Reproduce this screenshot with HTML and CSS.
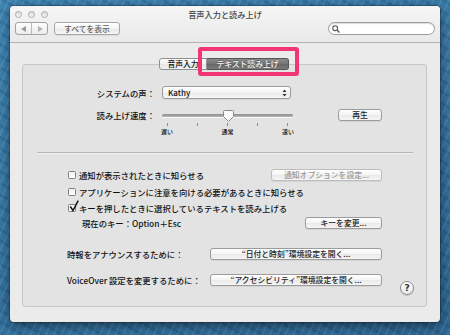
FILE: index.html
```html
<!DOCTYPE html>
<html lang="ja">
<head>
  <meta charset="UTF-8">
  <meta name="viewport" content="width=device-width, initial-scale=1.0">
  <title>音声入力と読み上げ</title>
  <link rel="stylesheet" href="styles.css">
</head>
<body>
  <div class="window">
    <header class="header">
      <div class="titlebar">
        <div class="lights"><span></span><span></span><span></span></div>
        <div class="title">音声入力と読み上げ</div>
        <div></div>
      </div>
      <div class="toolbar">
        <div class="nav">
          <span class="seg"><svg width="6" height="6" viewBox="0 0 6 6"><path d="M0 3 L5 0 L5 6 Z" fill="#9a9a9a"/></svg></span>
          <span class="seg"><svg width="6" height="6" viewBox="0 0 6 6"><path d="M6 3 L1 0 L1 6 Z" fill="#b4b4b4"/></svg></span>
        </div>
        <button class="btn show-all">すべてを表示</button>
        <div class="search">
          <svg width="8" height="8" viewBox="0 0 8 8"><circle cx="3.2" cy="3.2" r="2.4" fill="none" stroke="#555" stroke-width="1.1"/><path d="M5 5 L7.4 7.4" stroke="#555" stroke-width="1.4"/></svg>
        </div>
      </div>
    </header>

    <main class="content">
      <div class="tabs">
        <button class="tab">音声入力</button>
        <button class="tab active">テキスト読み上げ<span class="highlight"></span></button>
      </div>

      <section class="panel">
        <div class="voice-row">
          <label>システムの声：</label>
          <div class="popup">
            <span>Kathy</span>
            <svg width="5" height="8" viewBox="0 0 5 8"><path d="M2.5 0.5 L4.5 3 L0.5 3 Z M2.5 7.5 L4.5 5 L0.5 5 Z" fill="#333"/></svg>
          </div>
        </div>

        <div class="speed-row">
          <label>読み上げ速度：</label>
          <div class="slider">
            <div class="track">
              <span class="thumb"><svg width="11" height="12" viewBox="0 0 11 12"><path d="M1.5 0.5 H9.5 Q10.5 0.5 10.5 1.5 V6.5 L5.5 11.5 L0.5 6.5 V1.5 Q0.5 0.5 1.5 0.5 Z" fill="#fbfbfb" stroke="#8a8a8a"/></svg></span>
            </div>
            <div class="ticks"><i></i><i></i><i></i><i></i><i></i></div>
            <div class="scale"><span>遅い</span><span>通常</span><span>速い</span></div>
          </div>
          <button class="btn play">再生</button>
        </div>

        <hr class="sep">

        <div class="check-row first">
          <span class="box"></span>
          <span class="text">通知が表示されたときに知らせる</span>
          <button class="btn disabled notify">通知オプションを設定...</button>
        </div>
        <div class="check-row">
          <span class="box"></span>
          <span class="text">アプリケーションに注意を向ける必要があるときに知らせる</span>
        </div>
        <div class="check-row">
          <span class="box checked"><svg width="10" height="12" viewBox="0 0 10 12"><path d="M1.3 6.5 L4 10.5 L9.2 0.6" fill="none" stroke="#111" stroke-width="1.5"/></svg></span>
          <span class="text">キーを押したときに選択しているテキストを読み上げる</span>
        </div>
        <div class="check-row key-row">
          <span class="text">現在のキー：Option＋Esc</span>
          <button class="btn key">キーを変更...</button>
        </div>

        <div class="link-row announce">
          <span class="text">時報をアナウンスするために：</span>
          <button class="btn wide">“日付と時刻”環境設定を開く...</button>
        </div>
        <div class="link-row voiceover">
          <span class="text">VoiceOver 設定を変更するために：</span>
          <button class="btn wide">“アクセシビリティ”環境設定を開く...</button>
          <button class="help">?</button>
        </div>
      </section>
    </main>
  </div>
</body>
</html>
```

FILE: styles.css
```css
* {
  box-sizing: border-box;
}
body {
  margin: 0;
  padding: 6px 10px;
  width: 450px;
  height: 335px;
  overflow: hidden;
  font-family: "Noto Sans CJK JP", "Noto Sans", sans-serif;
  font-weight: 500;
  color: #111;
  background-color: #3575a4;
  background-image:
    repeating-linear-gradient(115deg, rgba(255,255,255,0.08) 0 2px, transparent 2px 7px),
    repeating-linear-gradient(30deg, rgba(0,20,60,0.12) 0 3px, transparent 3px 10px),
    linear-gradient(160deg, #3f86b5, #2d6793);
}
button {
  font-family: inherit;
  font-weight: inherit;
  margin: 0;
}
.window {
  width: 430px;
  height: 316px;
  display: flex;
  flex-direction: column;
  background: #ebebeb;
  border-radius: 4px;
  box-shadow: 0 3px 12px rgba(0,0,0,0.55), 0 0 0 1px rgba(0,0,0,0.2);
  overflow: hidden;
}

/* header */
.header {
  height: 37px;
  padding: 0 5px 7px;
  background: linear-gradient(#f6f6f6, #e9e9e9);
  border-bottom: 1px solid #b3b3b3;
}
.titlebar {
  height: 16px;
  display: grid;
  grid-template-columns: 1fr auto 1fr;
  align-items: center;
}
.lights {
  display: flex;
  gap: 6px;
  padding-top: 1px;
}
.lights span {
  width: 7px;
  height: 7px;
  border-radius: 50%;
  border: 1px solid #a9a9a9;
  background: linear-gradient(#d9d9d9, #f7f7f7);
}
.title {
  font-size: 8.2px;
  line-height: 10px;
  color: #444;
}
.toolbar {
  height: 13px;
  display: flex;
  align-items: center;
}
.nav {
  width: 33px;
  height: 13px;
  display: flex;
  border: 1px solid #a3a3a3;
  border-radius: 3px;
  background: linear-gradient(#fdfdfd, #ececec);
}
.nav .seg {
  flex: 1;
  display: flex;
  align-items: center;
  justify-content: center;
}
.nav .seg + .seg {
  border-left: 1px solid #b9b9b9;
}
.btn {
  height: 12px;
  padding: 0;
  border: 1px solid #9b9b9b;
  border-radius: 3px;
  background: linear-gradient(#ffffff, #f4f4f4 50%, #e9e9e9 51%, #f6f6f6);
  box-shadow: 0 1px 0 rgba(0,0,0,0.06);
  font-size: 7.8px;
  line-height: 10px;
  color: #222;
  white-space: nowrap;
}
.show-all {
  width: 66px;
  height: 13px;
  margin-left: 6px;
  color: #5f5f5f;
  border-color: #a6a6a6;
}
.search {
  margin-left: auto;
  width: 107px;
  height: 13px;
  border: 1px solid #9d9d9d;
  border-radius: 7px;
  background: #fff;
  box-shadow: inset 0 1px 1px rgba(0,0,0,0.15);
  display: flex;
  align-items: center;
  padding-left: 3px;
}

/* tabs + panel */
.content {
  flex: 1;
  display: flex;
  flex-direction: column;
  padding: 15px 13px 15px 12px;
}
.tabs {
  position: relative;
  z-index: 1;
  display: flex;
  justify-content: center;
  margin-bottom: -6px;
  padding-right: 1px;
}
.tab {
  height: 12px;
  padding: 0;
  font-size: 7.8px;
  line-height: 10px;
  border: 1px solid #8f8f8f;
  background: linear-gradient(#ffffff, #f0f0f0 50%, #e4e4e4 51%, #f3f3f3);
  color: #111;
  width: 48px;
  border-radius: 3px 0 0 3px;
}
.tab.active {
  position: relative;
  width: 82px;
  border-left: none;
  border-color: #555;
  border-radius: 0 3px 3px 0;
  background: linear-gradient(#8c8c8c, #737373 50%, #666 51%, #7a7a7a);
  color: #f5f5f5;
  text-shadow: 0 -1px 0 rgba(0,0,0,0.3);
}
.highlight {
  position: absolute;
  top: -12px;
  right: -11px;
  bottom: -7px;
  left: -9px;
  border: 4px solid #f23574;
  border-radius: 3px;
}
.panel {
  flex: 1;
  border: 1px solid #c6c6c6;
  border-radius: 3px;
  background: #e3e3e3;
  padding-top: 21px;
  display: flex;
  flex-direction: column;
  font-size: 8.35px;
}
.voice-row {
  display: grid;
  grid-template-columns: 132px 129px;
  column-gap: 7px;
  height: 13px;
  align-items: center;
}
.voice-row label,
.speed-row label {
  text-align: right;
  line-height: 12px;
}
.popup {
  height: 13px;
  display: flex;
  align-items: center;
  justify-content: space-between;
  padding: 0 3px 0 5px;
  border: 1px solid #9b9b9b;
  border-radius: 3px;
  background: linear-gradient(#ffffff, #f4f4f4 50%, #e9e9e9 51%, #f6f6f6);
  box-shadow: 0 1px 0 rgba(0,0,0,0.06);
  font-size: 8px;
  line-height: 11px;
}
.speed-row {
  margin-top: 10px;
  display: grid;
  grid-template-columns: 132px 131px 44px;
  column-gap: 7px;
  align-items: start;
}
.play {
  margin-left: 38px;
  width: 44px;
}
.slider {
  display: flex;
  flex-direction: column;
}
.track {
  position: relative;
  height: 12px;
  display: flex;
  align-items: center;
}
.track::before {
  content: "";
  flex: 1;
  height: 3px;
  border-radius: 2px;
  background: linear-gradient(#8d8d8d, #b5b5b5);
  box-shadow: 0 1px 0 rgba(255,255,255,0.7);
}
.thumb {
  position: absolute;
  left: 61px;
  top: 1px;
  display: flex;
}
.ticks {
  margin-top: 2px;
  height: 3px;
  display: flex;
  justify-content: space-between;
  padding: 0 5px;
}
.ticks i {
  width: 1px;
  height: 3px;
  background: #8b8b8b;
}
.scale {
  margin: 2px -6px 0;
  height: 8px;
  display: flex;
  justify-content: space-between;
  font-size: 6px;
  line-height: 8px;
}
.scale span {
  width: 22px;
  text-align: center;
}
.sep {
  margin: 16px 13px 0 14px;
  border: none;
  border-top: 1px solid #b4b4b4;
  border-bottom: 1px solid #f2f2f2;
  height: 0;
}
.check-row {
  height: 12px;
  margin-top: 4.5px;
  display: flex;
  align-items: center;
  padding: 0 44px 0 45px;
  line-height: 12px;
}
.check-row.first {
  margin-top: 15px;
}
.check-row .text {
  margin-left: 3px;
}
.box {
  position: relative;
  width: 8px;
  height: 8px;
  flex: none;
  border: 1px solid #7f7f7f;
  border-radius: 1.5px;
  background: linear-gradient(#f1f1f1, #ffffff);
}
.box svg {
  position: absolute;
  left: 0;
  top: -5px;
}
.notify {
  margin-left: auto;
  width: 111px;
}
.btn.disabled {
  color: #9a9a9a;
  border-color: #bdbdbd;
}
.key-row {
  margin-top: 3px;
  padding-left: 56px;
}
.key {
  margin-left: auto;
  width: 77px;
}
.link-row {
  height: 12px;
  display: flex;
  align-items: center;
  padding: 0 44px 0 44px;
  line-height: 12px;
}
.announce {
  margin-top: 19px;
}
.voiceover {
  margin-top: 14px;
  padding-right: 12px;
}
.wide {
  margin-left: auto;
  width: 172px;
}
.help {
  align-self: flex-start;
  margin: 7px 0 0 18px;
  width: 14px;
  height: 14px;
  flex: none;
  padding: 0;
  border: 1px solid #8e8e8e;
  border-radius: 50%;
  background: linear-gradient(#ffffff, #e6e6e6);
  box-shadow: 0 1px 1px rgba(0,0,0,0.15);
  font-family: "DejaVu Sans", sans-serif;
  font-weight: bold;
  font-size: 9px;
  line-height: 12px;
  color: #333;
}
```
